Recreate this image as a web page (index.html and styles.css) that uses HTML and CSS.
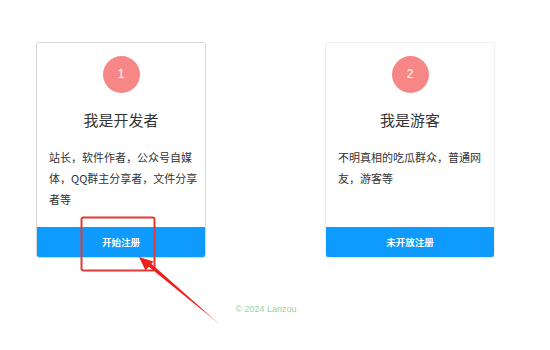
FILE: index.html
```html
<!DOCTYPE html>
<html lang="zh-CN">
<head>
  <meta charset="UTF-8">
  <title>注册</title>
  <link rel="stylesheet" href="styles.css">
</head>
<body>
  <!-- Two role cards -->
  <div class="roleRow">
    <div class="roleCard active">
      <div class="roleNum">1</div>
      <div class="roleTitle">我是开发者</div>
      <div class="roleDesc">站长，软件作者，公众号自媒体，QQ群主分享者，文件分享者等</div>
      <a class="roleBtn" href="#">开始注册</a>
    </div>
    <div class="roleCard">
      <div class="roleNum">2</div>
      <div class="roleTitle">我是游客</div>
      <div class="roleDesc">不明真相的吃瓜群众，普通网友，游客等</div>
      <a class="roleBtn" href="#">未开放注册</a>
    </div>
  </div>

  <div class="footer">© 2024 Lanzou</div>

  <!-- Red annotation drawn over the page -->
  <svg class="markup" width="550" height="350" viewBox="0 0 550 350">
    <defs>
      <linearGradient id="fade" x1="140" y1="257" x2="221" y2="325" gradientUnits="userSpaceOnUse">
        <stop offset="0" stop-color="#e8231f"/>
        <stop offset="0.75" stop-color="#e8231f"/>
        <stop offset="1" stop-color="#e8231f" stop-opacity="0.25"/>
      </linearGradient>
    </defs>
    <rect x="81.5" y="217.5" width="73" height="53" rx="2" fill="none" stroke="#e33a35" stroke-width="2"/>
    <polygon points="151,263.5 148.5,266.5 221,325.5" fill="url(#fade)"/>
    <polygon points="139,257 153.5,261.5 145.5,270.5" fill="#e8231f"/>
  </svg>
</body>
</html>
```

FILE: styles.css
```css
/* Page base */
body {
  margin: 0;
  padding-top: 42px;
  font-family: "Noto Sans CJK SC", "Liberation Sans", sans-serif;
  color: #333333;
  background: #ffffff;
  position: relative;
  width: 550px;
  height: 308px;
  overflow: hidden;
}
/* Row of cards */
.roleRow {
  display: flex;
  gap: 119px;
  padding-left: 36px;
}
.roleCard {
  width: 168px;
  height: 214px;
  border: 1px solid #efefef;
  border-radius: 3px;
  display: flex;
  flex-direction: column;
  align-items: center;
  overflow: hidden;
}
.roleCard.active {
  border-color: #d6d6d6;
}
/* Number circle */
.roleNum {
  margin-top: 13px;
  width: 37px;
  height: 37px;
  border-radius: 50%;
  background: #f78787;
  color: #ffffff;
  font-family: "Liberation Sans", sans-serif;
  font-size: 12px;
  line-height: 37px;
  text-align: center;
}
.roleTitle {
  margin-top: 17px;
  font-size: 15px;
  line-height: 20px;
  color: #333333;
}
.roleDesc {
  align-self: stretch;
  margin-top: 17px;
  padding: 0 6px 0 12px;
  font-size: 11px;
  line-height: 21px;
  color: #333333;
}
/* Bottom button */
.roleBtn {
  align-self: stretch;
  margin-top: auto;
  height: 30px;
  line-height: 30px;
  background: #0f9afd;
  color: #ffffff;
  text-align: center;
  font-size: 9.5px;
  font-weight: bold;
  text-decoration: none;
}
/* Footer */
.footer {
  margin-top: 44px;
  text-align: center;
  padding-right: 18px;
  font-family: "Liberation Sans", sans-serif;
  font-size: 9px;
  line-height: 14px;
  color: #9bd39b;
}
/* Annotation overlay */
.markup {
  position: absolute;
  left: 0;
  top: 0;
  pointer-events: none;
}
```
